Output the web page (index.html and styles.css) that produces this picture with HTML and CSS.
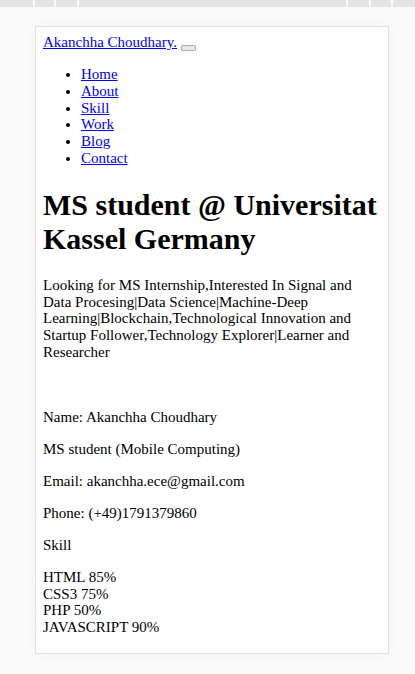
FILE: index.html
```html
<!DOCTYPE html>
<html>
<head>
<meta charset="utf-8">
<title>Akanchha Choudhary</title>
<link rel="stylesheet" href="styles.css">
</head>
<body>
<div class="topbar">
  <div class="cell c1"></div>
  <div class="cell c2"></div>
  <div class="cell c3"></div>
  <div class="cell c4"></div>
  <div class="cell c5"></div>
  <div class="cell c6"></div>
  <div class="cell c7"></div>
</div>
<div class="card">
  <nav class="nav">
    <div class="brand-row"><a href="#" class="brand">Akanchha Choudhary.</a> <button class="toggle" type="button"></button></div>
    <ul class="menu">
      <li><a href="#">Home</a></li>
      <li><a href="#">About</a></li>
      <li><a href="#">Skill</a></li>
      <li><a href="#">Work</a></li>
      <li><a href="#">Blog</a></li>
      <li><a href="#">Contact</a></li>
    </ul>
  </nav>
  <h1 class="title">MS student @ Universitat Kassel Germany</h1>
  <p class="intro">Looking for MS Internship,Interested In Signal and Data Procesing|Data Science|Machine-Deep Learning|Blockchain,Technological Innovation and Startup Follower,Technology Explorer|Learner and Researcher</p>
  <div class="about">
    <p>Name: Akanchha Choudhary</p>
    <p>MS student (Mobile Computing)</p>
    <p>Email: akanchha.ece@gmail.com</p>
    <p>Phone: (+49)1791379860</p>
    <p>Skill</p>
    <p class="skills">HTML 85%<br>CSS3 75%<br>PHP 50%<br>JAVASCRIPT 90%</p>
  </div>
</div>
</body>
</html>
```
FILE: styles.css
```css
html, body {
  margin: 0;
  padding: 0;
}
body {
  background: #fafafa;
  font-family: "Liberation Serif", "Times New Roman", serif;
  font-size: 15px;
  line-height: 16.7px;
  color: #000;
}
.topbar {
  display: flex;
  gap: 2px;
  height: 7px;
}
.cell {
  background: #e4e4e4;
}
.c1 { width: 33px; }
.c2 { width: 19px; }
.c3 { width: 21px; }
.c4 { flex: 1; }
.c5 { width: 21px; }
.c6 { width: 20px; }
.c7 { width: 22px; }
.card {
  box-sizing: border-box;
  width: 354px;
  margin: 19px 0 20px 35px;
  background: #fff;
  border: 1px solid #e3e3e3;
  box-shadow: 0 0 12px rgba(0, 0, 0, 0.04);
  padding: 7px 7px 2px;
}
.brand-row {
  height: 16.7px;
}
.toggle {
  width: 15px;
  height: 6px;
  padding: 0;
  vertical-align: -3px;
  border: 1px solid #a9a9a9;
  border-radius: 2px;
  background: #e9e9e9;
}
.menu {
  margin: 15.6px 0 0;
  padding-left: 38px;
}
.title {
  font-size: 30px;
  line-height: normal;
  margin: 21px 0 21.5px;
}
.intro {
  margin: 0 0 48px;
}
.about p {
  margin: 15.4px 0;
}
```
